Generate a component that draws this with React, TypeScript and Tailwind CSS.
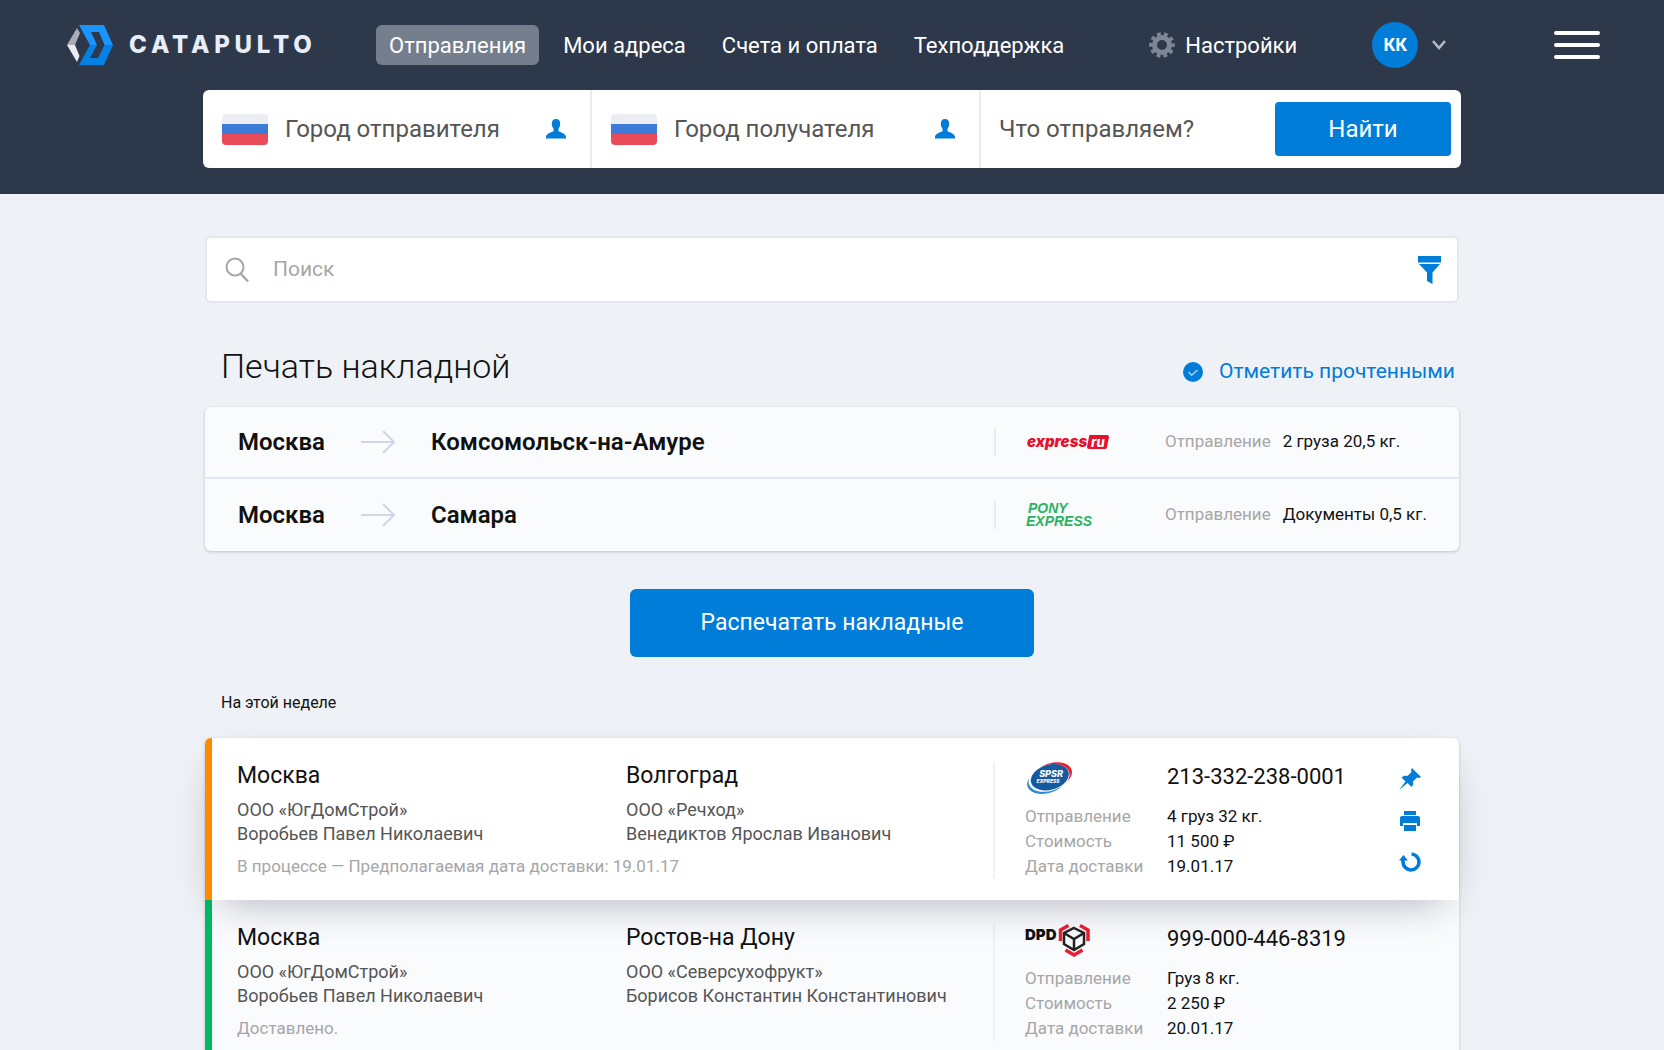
import React from "react";

const NAV_LINKS = ["Мои адреса", "Счета и оплата", "Техподдержка"];

type Waybill = { from: string; to: string; carrier: React.ReactNode; cargo: string };

type Party = { city: string; company: string; person: string };

type Shipment = {
  from: Party;
  to: Party;
  status: string;
  carrier: React.ReactNode;
  number: string;
  details: [string, string][];
  accent: string;
  active?: boolean;
};

const CatapultoMark = () => (
  <svg width="46" height="40" viewBox="0 0 46 40" aria-hidden="true">
    <path d="M10 3l3 5-5 12H0z" fill="#a9aeb6" />
    <path d="M0 20h8l4.500 11-2.500 6z" fill="#e8ecf2" />
    <path d="M12 0h25l9 20h-8.500L32 7h-8l6 13h-7z" fill="#1a94ff" />
    <path d="M12 40h25l9-20h-8.500L31 33h-8l7-13h-7z" fill="#0680e2" />
  </svg>
);

const Flag = () => (
  <svg width="46" height="31" viewBox="0 0 46 31" className="shrink-0 rounded-sm" aria-hidden="true">
    <path d="M0 0h46v10H0z" fill="#ebedf2" />
    <path d="M0 10h46v11H0z" fill="#3d7bd8" />
    <path d="M0 20h46v11H0z" fill="#e94b5b" />
  </svg>
);

const PersonIcon = () => (
  <svg width="20" height="20" viewBox="0 0 20 20" fill="#007cd9" aria-hidden="true">
    <path d="M10 0c2.800 0 4.200 2 4.200 4.800 0 2.300-.8 3.600-1.700 4.900v2.600c3 1.200 7.500 2.700 7.500 5.700v1.500H0V18c0-3 4.500-4.500 7.500-5.700V9.700c-.9-1.300-1.700-2.600-1.700-4.900C5.800 2 7.200 0 10 0z" />
  </svg>
);

const GearIcon = () => (
  <svg width="26" height="26" viewBox="-13 -13 26 26" fill="none" stroke="#7e8795" aria-hidden="true">
    <circle r="7.500" strokeWidth="5" />
    <circle r="11" strokeWidth="3.600" strokeDasharray="3.800 3.112" strokeDashoffset="1.900" />
  </svg>
);

const SearchIcon = () => (
  <svg width="24" height="26" viewBox="0 0 24 26" fill="none" stroke="#a6a6a6" strokeWidth="2" aria-hidden="true">
    <circle cx="10" cy="10" r="8.500" />
    <path d="M16 17l7 7.500" strokeWidth="2.500" />
  </svg>
);

const FilterIcon = () => (
  <svg width="23" height="28" viewBox="0 0 23 28" fill="#007cd9" aria-hidden="true">
    <path d="M0 0h23v6.500H0z" />
    <path d="M1 8h21l-7.500 8.500V28L9 25v-8.500z" />
  </svg>
);

const CheckIcon = () => (
  <svg width="20" height="20" viewBox="0 0 20 20" aria-hidden="true">
    <circle cx="10" cy="10" r="10" fill="#007cd9" />
    <path d="M5.500 10l3.200 3.200L14.500 8" fill="none" stroke="#9ccdf3" strokeWidth="1.600" />
  </svg>
);

const ArrowIcon = () => (
  <svg width="35" height="24" viewBox="0 0 35 24" fill="none" stroke="#cfd7e4" strokeWidth="2" aria-hidden="true">
    <path d="M0 12h33M22 1l11 11-11 11" />
  </svg>
);

const PinIcon = () => (
  <svg width="22" height="22" viewBox="0 0 22 22" fill="#007cd9" aria-hidden="true">
    <path d="M13 0l9 9-2 1-2-.500-4 4c.500 2 0 4-1.500 5.500l-4-4L0 22l6.500-8.500-4-4C4 8 6 7.500 8.500 8l4-4L12 2z" />
  </svg>
);

const PrintIcon = () => (
  <svg width="20" height="20" viewBox="0 0 20 20" fill="#007cd9" aria-hidden="true">
    <path d="M4 0h12v4H4zM2 5h16a2 2 0 0 1 2 2v8h-3v-3H3v3H0V7a2 2 0 0 1 2-2zM4 14h12v6H4z" />
  </svg>
);

const RepeatIcon = () => (
  <svg width="22" height="20" viewBox="0 0 22 20" aria-hidden="true">
    <path d="M12.500 2a8 8 0 1 1-8.500 8V7" fill="none" stroke="#007cd9" strokeWidth="3.600" />
    <path d="M0 8.500L4.500 3 9 8.500z" fill="#007cd9" />
  </svg>
);

const ExpressRuLogo = () => (
  <svg width="84" height="20" viewBox="0 0 84 20" role="img" aria-label="express.ru">
    <text x="1" y="15" fill="#e8112d" fontFamily="Inter" fontWeight="900" fontStyle="italic" fontSize="15">
      express
    </text>
    <path d="M66 3h15a2 2 0 0 1 2 2l-2 10a2 2 0 0 1-2 2H63a2 2 0 0 1-2-2l2-10a2 2 0 0 1 3-2z" fill="#e8112d" />
    <text x="65" y="15" fill="#fff" fontFamily="Inter" fontWeight="800" fontStyle="italic" fontSize="13">
      ru
    </text>
  </svg>
);

const PonyExpressLogo = () => (
  <div className="font-['Liberation_Sans'] text-sm leading-[13px] font-bold text-[#2cb35c] italic">
    <div className="pl-0.5">PONY</div>
    <div>EXPRESS</div>
  </div>
);

const SpsrLogo = () => (
  <svg width="48" height="34" viewBox="0 0 48 34" role="img" aria-label="SPSR Express">
    <g transform="rotate(-16 24 17)">
      <ellipse cx="28" cy="15.500" rx="20" ry="12.500" fill="#ee1c2e" />
      <ellipse cx="21" cy="19" rx="20" ry="12.500" fill="#2e8ad8" />
      <ellipse cx="24" cy="17" rx="21" ry="13" fill="#fff" />
      <ellipse cx="25" cy="16.500" rx="19.500" ry="12.500" fill="#155a9e" />
    </g>
    <text x="26" y="16" textAnchor="middle" fill="#fff" fontFamily="Inter" fontWeight="800" fontStyle="italic" fontSize="9">
      SPSR
    </text>
    <text x="23" y="22" textAnchor="middle" fill="#fff" fontFamily="Inter" fontWeight="800" fontStyle="italic" fontSize="5">
      EXPRESS
    </text>
  </svg>
);

const DpdLogo = () => (
  <svg width="66" height="34" viewBox="0 0 66 34" role="img" aria-label="DPD">
    <text x="0" y="17" fill="#111" fontFamily="Inter" fontWeight="900" fontSize="15">
      DPD
    </text>
    <g fill="none" strokeWidth="3.500">
      <path d="M35.500 18V7l8-4.500M63 18V7l-8-4.500M40.500 27l8.500 5 8.500-5" stroke="#ee1c2e" />
      <path d="M49 5l10 5v11l-10 6-10-6V10zM39 10l10 6 10-6M49 16v11" stroke="#222" strokeWidth="2.500" />
    </g>
  </svg>
);

const waybills: Waybill[] = [
  { from: "Москва", to: "Комсомольск-на-Амуре", carrier: <ExpressRuLogo />, cargo: "2 груза 20,5 кг." },
  { from: "Москва", to: "Самара", carrier: <PonyExpressLogo />, cargo: "Документы 0,5 кг." },
];

const sender: Party = { city: "Москва", company: "ООО «ЮгДомСтрой»", person: "Воробьев Павел Николаевич" };

const shipments: Shipment[] = [
  {
    from: sender,
    to: { city: "Волгоград", company: "ООО «Речход»", person: "Венедиктов Ярослав Иванович" },
    status: "В процессе — Предполагаемая дата доставки: 19.01.17",
    carrier: <SpsrLogo />,
    number: "213-332-238-0001",
    details: [
      ["Отправление", "4 груз 32 кг."],
      ["Стоимость", "11 500 ₽"],
      ["Дата доставки", "19.01.17"],
    ],
    accent: "border-[#ff8a00]",
    active: true,
  },
  {
    from: sender,
    to: { city: "Ростов-на Дону", company: "ООО «Северсухофрукт»", person: "Борисов Константин Константинович" },
    status: "Доставлено.",
    carrier: <DpdLogo />,
    number: "999-000-446-8319",
    details: [
      ["Отправление", "Груз 8 кг."],
      ["Стоимость", "2 250 ₽"],
      ["Дата доставки", "20.01.17"],
    ],
    accent: "border-[#00bb66]",
  },
];

const CityField = ({ placeholder }: { placeholder: string }) => (
  <div className="flex w-[389px] items-center border-r-2 border-[#e8ecf2] pr-6 pl-[19px]">
    <Flag />
    <input
      aria-label={placeholder}
      placeholder={placeholder}
      className="ml-[17px] min-w-0 flex-1 text-2xl placeholder:text-[#555] outline-none"
    />
    <button type="button" aria-label="Выбрать из адресной книги">
      <PersonIcon />
    </button>
  </div>
);

const Header = () => (
  <header className="bg-[#2e384b] pb-[26px] text-white">
    <div className="flex h-[90px] items-center px-16 text-[22px]">
      <a href="#" className="ml-[3px] flex w-[309px] items-center gap-4 font-['Inter'] text-2xl font-extrabold tracking-[0.2em] text-[#e8eef8]">
        <CatapultoMark />
        CATAPULTO
      </a>
      <nav className="flex items-center gap-9">
        <a href="#" className="-mr-3 flex h-10 items-center rounded-md bg-[#747e8d] px-[13px]">
          Отправления
        </a>
        {NAV_LINKS.map((label) => (
          <a key={label} href="#">
            {label}
          </a>
        ))}
      </nav>
      <a href="#" className="ml-[85px] flex items-center gap-2.5">
        <GearIcon />
        Настройки
      </a>
      <button aria-label="Профиль" className="ml-[75px] flex items-center gap-3.5">
        <span className="flex size-[46px] items-center justify-center rounded-full bg-[#007cd9] text-lg font-bold">КК</span>
        <svg width="14" height="10" viewBox="0 0 14 10" fill="none" stroke="#b5bbc5" strokeWidth="2.500" aria-hidden="true">
          <path d="M1 1l6 7 6-7" />
        </svg>
      </button>
      <button aria-label="Меню" className="ml-auto flex flex-col gap-2">
        <span className="h-1 w-[46px] rounded-full bg-white" />
        <span className="h-1 w-[46px] rounded-full bg-white" />
        <span className="h-1 w-[46px] rounded-full bg-white" />
      </button>
    </div>
    <form className="mx-auto flex h-[78px] max-w-[1258px] rounded-md bg-white text-[#555]">
      <CityField placeholder="Город отправителя" />
      <CityField placeholder="Город получателя" />
      <input
        aria-label="Что отправляем?"
        placeholder="Что отправляем?"
        className="min-w-0 flex-1 pl-[18px] text-2xl placeholder:text-[#555] outline-none"
      />
      <button type="button" className="m-3 mr-2.5 w-[176px] rounded-sm bg-[#007cd9] text-2xl text-white">
        Найти
      </button>
    </form>
  </header>
);

const WaybillRow = ({ from, to, carrier, cargo }: Waybill) => (
  <li className="flex h-[72px] items-center pl-[33px]">
    <span className="w-[123px] text-2xl font-semibold">{from}</span>
    <ArrowIcon />
    <span className="ml-[35px] flex-1 text-2xl font-semibold">{to}</span>
    <div className="flex h-7 w-[171px] items-center border-l-2 border-[#e8ecf2] pl-[30px]">{carrier}</div>
    <div className="flex w-[294px] gap-3 text-[17px]">
      <span className="text-[#a6a6a6]">Отправление</span>
      <span>{cargo}</span>
    </div>
  </li>
);

const PartyInfo = ({ city, company, person }: Party) => (
  <div>
    <h3 className="text-[23px] leading-8">{city}</h3>
    <p className="mt-1.5 text-lg leading-6 text-[#555]">
      {company}
      <br />
      {person}
    </p>
  </div>
);

const ShipmentCard = ({ from, to, status, carrier, number, details, accent, active }: Shipment) => (
  <article
    className={`flex border-l-[7px] pt-[22px] pb-[19px] pl-[25px] ${accent} ${
      active ? "relative z-10 rounded-t-md bg-white shadow-[0_16px_40px_-16px_rgba(30,32,55,0.36)]" : "bg-[#fafbfd]"
    }`}
  >
    <div className="flex-1">
      <div className="grid grid-cols-[389px_1fr]">
        <PartyInfo {...from} />
        <PartyInfo {...to} />
      </div>
      <p className="mt-2 text-[17px] leading-6 text-[#a6a6a6]">{status}</p>
    </div>
    <div className="my-0.5 flex w-[466px] justify-between border-l-2 border-[#f0f1f4] pl-[30px]">
      <div>
        <div className="flex h-7 items-center">
          <div className="w-[142px] pt-1">{carrier}</div>
          <div className="text-[22px]">{number}</div>
        </div>
        <dl className="mt-3.5 grid grid-cols-[142px_1fr] text-[17px] leading-[25px]">
          {details.map(([label, value]) => (
            <React.Fragment key={label}>
              <dt className="text-[#a6a6a6]">{label}</dt>
              <dd>{value}</dd>
            </React.Fragment>
          ))}
        </dl>
      </div>
      {active && (
        <div className="mr-[38px] flex flex-col items-center gap-[21px] pt-1.5">
          <button aria-label="Закрепить">
            <PinIcon />
          </button>
          <button aria-label="Распечатать">
            <PrintIcon />
          </button>
          <button aria-label="Повторить">
            <RepeatIcon />
          </button>
        </div>
      )}
    </div>
  </article>
);

const App = () => {
  return (
    <div className="min-h-screen bg-[#eef1f5] font-['Roboto',sans-serif] text-[#111]">
      <Header />
      <main className="mx-auto max-w-[1254px] pt-[42px]">
        <div className="flex h-[67px] items-center rounded-md border-2 border-[#e3e8f0] bg-white pr-4 pl-[18px]">
          <SearchIcon />
          <input
            aria-label="Поиск"
            placeholder="Поиск"
            className="ml-6 min-w-0 flex-1 text-[21px] outline-none placeholder:text-[#a6a6a6]"
          />
          <button aria-label="Фильтр">
            <FilterIcon />
          </button>
        </div>

        <div className="mt-[39px] flex h-12 items-center justify-between pr-1 pl-4">
          <h1 className="text-[34px] font-light">Печать накладной</h1>
          <button className="mt-3 flex items-center gap-4 text-[21px] text-[#007cd9]">
            <CheckIcon />
            Отметить прочтенными
          </button>
        </div>
        <ul className="mt-[17px] divide-y-2 divide-[#e3e8f0] rounded-md bg-[#fafbfd] shadow-[0_1px_3px_rgba(40,45,70,0.25)]">
          {waybills.map((waybill) => (
            <WaybillRow key={waybill.to} {...waybill} />
          ))}
        </ul>

        <button className="mx-auto mt-[38px] block h-[68px] w-[404px] rounded-md bg-[#007cd9] text-[23px] text-white">
          Распечатать накладные
        </button>

        <h2 className="mt-[34px] pl-4 text-base leading-6">На этой неделе</h2>
        <section className="mt-[23px] rounded-md shadow-[0_1px_3px_rgba(40,45,70,0.25)]">
          {shipments.map((shipment) => (
            <ShipmentCard key={shipment.number} {...shipment} />
          ))}
        </section>
      </main>
    </div>
  );
};

export default App;
